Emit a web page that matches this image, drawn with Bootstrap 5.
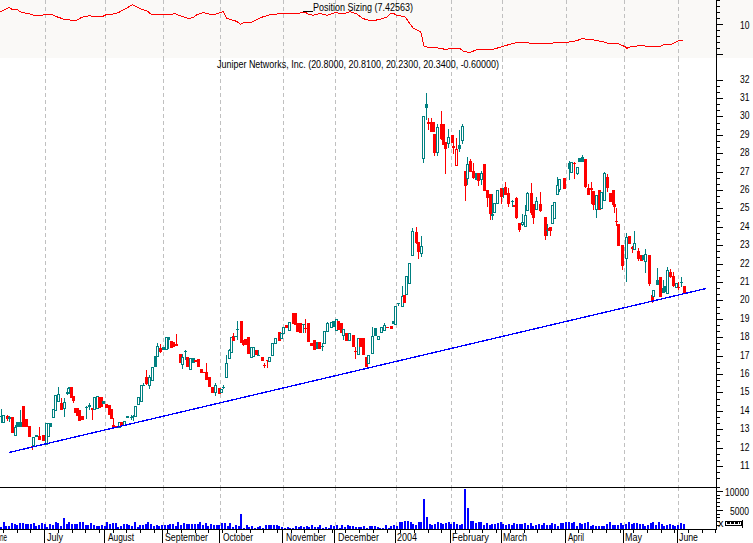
<!DOCTYPE html>
<html lang="en">
<head>
<meta charset="utf-8">
<title>Juniper Networks, Inc.</title>
<link href="https://cdn.jsdelivr.net/npm/bootstrap@5.3.0/dist/css/bootstrap.min.css" rel="stylesheet">
<style>
html,body{background:#fff;overflow:hidden}
.chart-sheet{width:753px;height:543px}
.pane-svg{display:block;width:753px;shape-rendering:crispEdges;overflow:visible}
.pane-top{height:58px;background:#faf9f7}
.pane-price{height:429px}
.pane-vol{height:42px}
.pane-dates{height:14px}
.pane-svg text{font-family:"Liberation Sans",Arial,sans-serif;font-size:11px;fill:#000;text-rendering:optimizeSpeed}
.grid-line{stroke:#c0c0c0;stroke-width:1;stroke-dasharray:4 3}
.axis-line{stroke:#000;stroke-width:1}
.trend-line{stroke:#0000ff;stroke-width:1.3;fill:none}
.ind-line{stroke:#ff0000;stroke-width:1;fill:none}
</style>
</head>
<body class="m-0 p-0">
<main class="chart-sheet d-flex flex-column">
  <svg class="pane-svg pane-top flex-shrink-0" id="pTop" viewBox="0 0 753 58" xmlns="http://www.w3.org/2000/svg">
    <g id="gTop"></g>
    <polyline id="indLine" class="ind-line"/>
    <line class="axis-line" x1="303" y1="11.5" x2="313" y2="11.5"/>
    <text x="313" y="11" textLength="100" lengthAdjust="spacingAndGlyphs">Position Sizing (7.42563)</text>
    <text x="740" y="29" textLength="9.5" lengthAdjust="spacingAndGlyphs">10</text>
  </svg>
  <svg class="pane-svg pane-price flex-shrink-0" id="pPrice" viewBox="0 58 753 429" xmlns="http://www.w3.org/2000/svg">
    <g id="gPrice"></g>
    <g id="gCandles"></g>
    <line class="trend-line" x1="9" y1="452.5" x2="706" y2="288.5"/>
    <text x="217" y="68" textLength="282" lengthAdjust="spacingAndGlyphs">Juniper Networks, Inc. (20.8000, 20.8100, 20.2300, 20.3400, -0.60000)</text>
    <g id="gPriceLabels"></g>
  </svg>
  <svg class="pane-svg pane-vol flex-shrink-0" id="pVol" viewBox="0 487 753 42" xmlns="http://www.w3.org/2000/svg">
    <g id="gVol"></g>
    <g id="gBars" fill="#0000ff"></g>
    <text x="725" y="496" textLength="24" lengthAdjust="spacingAndGlyphs">10000</text>
    <text x="730" y="515" textLength="19" lengthAdjust="spacingAndGlyphs">5000</text>
    <text x="718" y="527">x</text>
    <rect x="725" y="521.5" width="16" height="4" fill="none" stroke="#000" stroke-width="1"/>
    <line x1="727" y1="522" x2="740" y2="522" stroke="#000" stroke-width="3" stroke-dasharray="3 1"/>
    <line class="axis-line" x1="742.5" y1="520" x2="742.5" y2="528"/>
  </svg>
  <svg class="pane-svg pane-dates flex-shrink-0" id="pDates" viewBox="0 529 753 14" xmlns="http://www.w3.org/2000/svg">
    <g id="gDates"></g>
    <text x="0" y="541" textLength="7" lengthAdjust="spacingAndGlyphs">ne</text>
    <text x="47" y="541" textLength="16" lengthAdjust="spacingAndGlyphs">July</text>
    <text x="108" y="541" textLength="26" lengthAdjust="spacingAndGlyphs">August</text>
    <text x="165" y="541" textLength="43" lengthAdjust="spacingAndGlyphs">September</text>
    <text x="223" y="541" textLength="30" lengthAdjust="spacingAndGlyphs">October</text>
    <text x="286" y="541" textLength="40" lengthAdjust="spacingAndGlyphs">November</text>
    <text x="338" y="541" textLength="41" lengthAdjust="spacingAndGlyphs">December</text>
    <text x="397" y="541" textLength="20" lengthAdjust="spacingAndGlyphs">2004</text>
    <text x="452" y="541" textLength="37" lengthAdjust="spacingAndGlyphs">February</text>
    <text x="503" y="541" textLength="24" lengthAdjust="spacingAndGlyphs">March</text>
    <text x="568" y="541" textLength="16" lengthAdjust="spacingAndGlyphs">April</text>
    <text x="625" y="541" textLength="17" lengthAdjust="spacingAndGlyphs">May</text>
    <text x="679" y="541" textLength="19" lengthAdjust="spacingAndGlyphs">June</text>
  </svg>
</main>
<script>
const NS='http://www.w3.org/2000/svg';
function el(parent,tag,attrs){const e=document.createElementNS(NS,tag);for(const k in attrs)e.setAttribute(k,attrs[k]);parent.appendChild(e);return e;}
const $=id=>document.getElementById(id);
const grids=[45,105,163,220,283,335,396,451,502,566,624,678];
function gridLines(g,y1,y2){grids.forEach(x=>el(g,'line',{class:'grid-line',x1:x+.5,y1:y1,x2:x+.5,y2:y2}));}
function hline(g,x1,x2,y){el(g,'line',{class:'axis-line',x1:x1,y1:y+.5,x2:x2,y2:y+.5});}
function vline(g,x,y1,y2){el(g,'line',{class:'axis-line',x1:x+.5,y1:y1,x2:x+.5,y2:y2});}

/* indicator pane */
gridLines($('gTop'),0,58);
vline($('gTop'),716,0,58);
for(let y=0;y<=54;y+=6)hline($('gTop'),716,y===24||y===54?723:720,y);
const z1=[0,36,28,22,35,28,50,28,65,38,85,40,100,45,130,45,155,43,170,50,190,57,210,60,230,61,245,52,268,47,285,50,305,51,318,44,340,42,355,38,398,14,425,28,440,32,455,44,495,45,525,41,540,47,565,55,580,53,590,44,610,38,630,43,645,43,670,35,680,55,695,60,710,64,722,73,732,67,757,66,775,56,790,50,810,44,830,42,855,41,890,41,915,36,925,43,940,46,960,40,980,46,1005,38,1030,41,1050,35,1070,42,1090,56,1115,63,1140,58];
const z2=[20,52,30,42,40,40,50,46,75,50,90,72,100,85,122,95,132,138,145,142,170,143,195,148,215,146,240,146,252,155,270,157,295,148,340,148,365,140,400,130,415,127,440,127,455,132,490,130,550,128,575,125,590,122,608,115,625,120,635,118,650,122,670,125,680,129,710,129,735,140,740,145,755,139,785,137,805,139,840,139,850,135,875,133,895,123,908,120];
let pts=[];
for(let i=0;i<z1.length;i+=2)pts.push((z1[i]/3).toFixed(1)+','+(z1[i+1]/3).toFixed(1));
for(let i=0;i<z2.length;i+=2)pts.push((380+z2[i]/3).toFixed(1)+','+(z2[i+1]/3).toFixed(1));
$('indLine').setAttribute('points',pts.join(' '));

/* price pane */
gridLines($('gPrice'),58,487);
vline($('gPrice'),716,58,487);
const yP=p=>466-(p-11)*18.4;
for(let p=32;p>=10.2;p-=1/3){const y=Math.round(yP(p));hline($('gPrice'),716,Math.abs(p-Math.round(p))<.01?723:720,y);}
for(let p=32;p>=11;p--){const t=el($('gPriceLabels'),'text',{x:740,y:Math.round(yP(p))+3,textLength:9.5,lengthAdjust:'spacingAndGlyphs'});t.textContent=p;}

/* candles: zx type top bot [hi lo], coordinates as read at 3x from a crop origin */
const segs=[
[0,330,"3 t 258 262 237 280;10 o 255 275;22 r 258 266 255 272;28 t 260 268 258 275;37 r 262 308;45 o 290 315 285 318;52 t 277 292;60 t 275 290 240 292;68 r 228 290;77 r 268 292;87 r 288 322;95 r 347 350 335 360;100 o 320 345;108 t 315 320;118 r 318 330 292 332;128 r 315 332;137 o 280 342;143 o 280 318 278 320;150 t 280 290;158 o 238 262;165 o 195 240;174 o 192 212 172 215;183 r 218 240 205 242;192 o 215 235 205 262;200 t 187 193 175 195;207 t 172 178 170 190;212 r 170 205;218 r 198 212 198 218;225 r 235 248;232 r 235 258;238 r 240 272;246 r 258 270;258 t 231 234 228 268;268 t 225 232 218 238;276 r 235 240 233 270;282 o 200 238;290 o 198 235;296 r 200 235;302 r 200 232;308 t 214 221;318 r 222 235;326 r 225 255;332 r 238 268;340 r 285 292 265 292;348 r 288 292;357 o 275 290;364 r 275 288;373 o 272 285;382 t 258 265;392 t 260 264 255 270;398 t 258 262 255 272;406 o 228 258;414 o 200 222;424 o 165 212;430 t 165 168 160 170;438 r 140 162 120 165;447 o 140 165 135 178;455 o 110 150;465 t 78 112;470 o 48 78 40 80;480 r 55 65 42 68;490 t 52 60;498 o 22 58;505 t 22 30 20 55;512 r 32 55;520 r 35 50;528 r 43 47 13 48;540 r 72 100;545 o 82 102 72 118;555 t 64 66 60 90;562 r 80 110;570 o 85 118;578 t 85 100;586 r 90 95;595 r 88 112;604 r 118 130;612 r 125 130;619 r 125 150 100 150;628 r 140 170;637 r 170 188;645 o 165 185 160 200;656 r 175 192;662 o 178 185;670 t 171 173 165 178"],
[220,300,"18 o 188 230 165 230;27 o 150 175 148 178;33 o 110 155;40 r 108 122 100 122;45 t 108 112;52 t 87 89 62 118;62 r 62 130;70 r 125 135 120 138;75 r 118 135;85 r 110 162;92 o 142 172;100 o 140 168;108 r 150 165;115 t 164 166 150 166;125 r 172 182;133 r 194 196 190 205;142 r 180 182 180 205;148 o 172 182;157 o 130 165;165 o 113 130;177 r 95 122;182 o 98 115;190 o 80 98;199 r 75 85;208 o 65 90;218 r 38 72;224 r 40 75;232 r 68 95;240 r 70 100;248 t 73 75 72 100;256 r 84 86 58 100;265 r 70 125;272 r 130 138;282 r 120 150;290 t 125 148;298 r 125 148;305 t 139 141 130 155;313 o 92 130;322 o 70 92 65 94;332 o 65 82;340 t 62 80;348 o 58 90;355 r 62 90;362 r 70 100;370 o 88 105 88 120;378 r 100 122;388 o 100 120;398 r 105 142;405 r 154 156 140 175;413 o 115 162;420 r 113 140;428 r 113 165;438 r 170 200;445 o 165 188;455 o 108 158 82 160;465 t 85 108;475 o 108 118;483 o 82 95;492 o 75 90 70 95;500 r 80 84;512 r 78 88;520 t 62 72"],
[360,200,"105 o 318 372;113 t 309 311 308 318;125 o 288 318 258 320;132 r 285 308;138 o 228 282;147 o 190 250;155 o 92 165 85 168;168 r 95 130 80 132;175 r 125 155 125 175;182 o 138 158 108 170"],
[400,80,"70 o 108 235 108 248;78 t 72 85 40 122;85 r 127 132 115 152;93 r 125 155 115 158;100 r 125 155;103 r 162 220 162 228;112 o 142 215 132 228;122 r 132 178 93 180;128 r 132 195;136 r 185 208 185 282;145 o 172 190 148 205;157 r 165 188;160 r 198 204 168 222;168 o2 208 254 175 256;178 t 195 207 150 215;185 o 138 180 132 192;195 r 272 318 272 362;200 o 252 295 232 315;211 r 243 275 238 277;220 r 272 295 250 297;228 t 280 300;235 r 278 302 278 318;242 o 278 298 272 315;253 r 252 332;262 r 330 355 330 380;270 r 342 402 342 420;275 o 402 405 342 420;282 o 370 395 368 398;292 o 330 370;303 r 325 350 325 372;310 t 324 326 325 355;316 r 322 345 305 345;325 r 338 372 325 382;335 t 364 366 360 380;342 r 375 380;347 r 355 415 350 415;358 r 430 450 430 458;367 o 425 432 402 438;376 o 405 438 375 438;382 o 340 390 335 392;392 r 340 400 308 405;400 r 372 415 372 432;408 o 362 388 350 390;420 r 372 392 335 394;434 r 410 468 410 480;442 t 451 453 432 468;448 r 445 452"],
[550,140,"0 r 262 272 262 288;5 o 195 250;12 o 185 235;20 o 135 162 110 164;27 o 118 148 118 158;43 r 115 148;57 t 70 88 62 118;63 o 65 95;73 r 68 72 65 115;80 o 82 98 82 105;88 t 55 65;97 t 52 65 45 67;105 r 58 140 58 145;115 r 145 165 133 167;122 r 145 150 125 190;130 r 152 195 152 208;138 o 165 208 165 235;148 r 150 210;153 o 155 205;163 o 100 180 95 182;172 r 110 145 102 155;181 r 158 185;188 r 150 195;192 r 192 202 192 220;197 r 244 246 205 260;205 r 252 318;215 r 315 378 315 390;227 o 292 355 280 428;238 r 288 312;245 r 322 326 318 340;253 o 310 326 272 328;265 r 333 358 325 365;272 r 345 362;278 t 345 360;286 o 342 362 328 400;298 r 345 432 345 438;305 r 465 485 452 487;310 o 450 468;320 t 420 435 385 437;330 r 412 470;338 t 445 458 420 460;345 t 438 456;352 o 390 458 382 460;360 r 395 410 388 415;370 r 408 438 395 440;377 o 428 440;385 r 441 443 425 448;394 t 426 428 410 440;403 r 438 460"]
];
const TEAL='#008080',RED='#ff0000',gC=$('gCandles');
segs.forEach(([x0,y0,s])=>s.split(';').forEach(row=>{
  const [zx,type,a,b,c,d]=row.trim().split(' ');
  const cx=Math.round(x0+ +zx/3),top=Math.round(y0+a/3),bot=Math.round(y0+b/3);
  const col=(type==='r'||type==='o2')?RED:TEAL;
  if(c!==undefined){el(gC,'rect',{x:cx,y:Math.round(y0+c/3),width:1,height:Math.max(1,Math.round((d-c)/3)),fill:col});}
  if(type==='o'||type==='o2'){
    el(gC,'rect',{x:cx-.5,y:top+.5,width:2,height:Math.max(1,bot-top),fill:'#fff',stroke:col,'stroke-width':1});
  }else{
    el(gC,'rect',{x:cx-1,y:top,width:3,height:Math.max(1,bot-top),fill:col});
  }
}));

/* volume pane */
gridLines($('gVol'),487,529);
hline($('gVol'),0,717,486.5);
vline($('gVol'),716,487,529);
const gV=$('gVol');
for(let y=487;y<526;y+=3.8){const r=Math.round(y);const maj=(r>=491&&r<=492)||(r>=510&&r<=511);hline(gV,716,maj?723:720,r);}
let seed=7;const rnd=()=>(seed=(seed*16807)%2147483647)/2147483647;
const spikes={};[[63,11],[239,15],[423,30],[426,12],[465,40],[468,21]].forEach(([x,h])=>spikes[Math.round(x/2.73)]=h);
for(let i=0;i<251;i++){
  const x=Math.round(i*2.73);if(x>684)break;
  const amp=x<240?[2,7]:x<396?[1,4]:x<480?[3,8]:[3,7];
  const h=spikes[i]||Math.round(amp[0]+rnd()*(amp[1]-amp[0]));
  el($('gBars'),'rect',{x:x,y:529-h,width:2,height:h});
}

/* date axis */
const gD=$('gDates');
hline(gD,0,717,529);
grids.forEach(x=>vline(gD,x-1,529,543));
for(let x=3;x<716;x+=13.7)vline(gD,Math.round(x),529,533);
</script>
<script src="https://cdn.jsdelivr.net/npm/bootstrap@5.3.0/dist/js/bootstrap.bundle.min.js"></script>
</body>
</html>
